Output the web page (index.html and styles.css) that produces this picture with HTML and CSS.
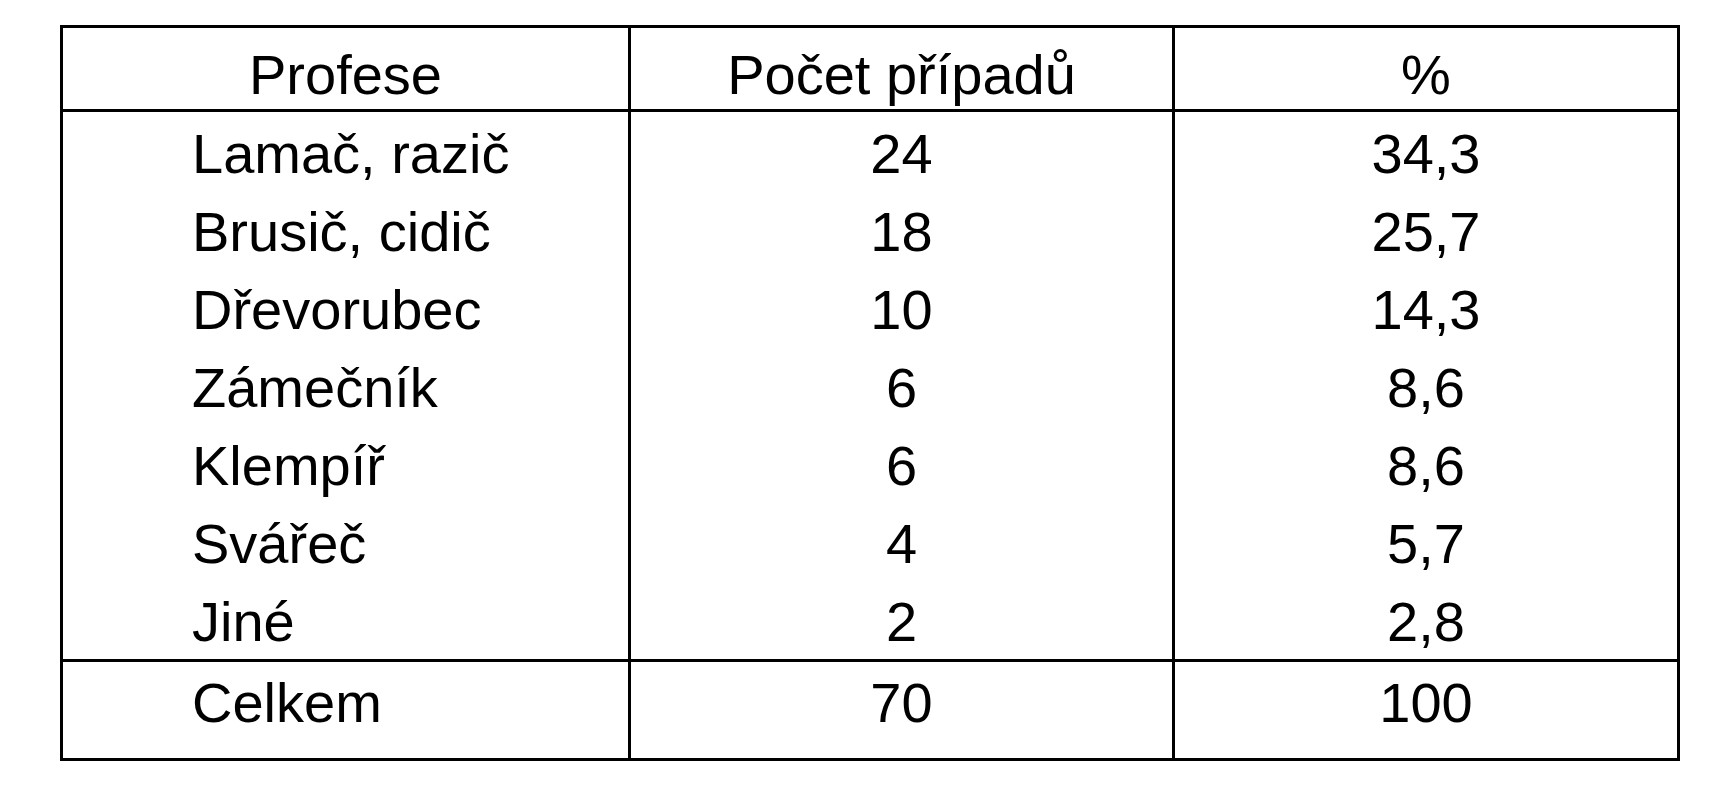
FILE: index.html
```html
<!DOCTYPE html>
<html lang="cs">
<head>
<meta charset="utf-8">
<title>Profese</title>
<link rel="stylesheet" href="styles.css">
</head>
<body>
<main class="page">
  <table class="stats">
    <thead>
      <tr class="head-row">
        <th class="c1">Profese</th>
        <th class="c2">Počet případů</th>
        <th class="c3">%</th>
      </tr>
    </thead>
    <tbody>
      <tr class="row r1"><td class="c1 name">Lamač, razič</td><td class="c2">24</td><td class="c3">34,3</td></tr>
      <tr class="row"><td class="c1 name">Brusič, cidič</td><td class="c2">18</td><td class="c3">25,7</td></tr>
      <tr class="row"><td class="c1 name">Dřevorubec</td><td class="c2">10</td><td class="c3">14,3</td></tr>
      <tr class="row"><td class="c1 name">Zámečník</td><td class="c2">6</td><td class="c3">8,6</td></tr>
      <tr class="row"><td class="c1 name">Klempíř</td><td class="c2">6</td><td class="c3">8,6</td></tr>
      <tr class="row"><td class="c1 name">Svářeč</td><td class="c2">4</td><td class="c3">5,7</td></tr>
      <tr class="row last"><td class="c1 name">Jiné</td><td class="c2">2</td><td class="c3">2,8</td></tr>
    </tbody>
    <tfoot>
      <tr class="total-row"><td class="c1 name">Celkem</td><td class="c2">70</td><td class="c3">100</td></tr>
    </tfoot>
  </table>
</main>
</body>
</html>
```
FILE: styles.css
```css
html, body {
  margin: 0;
  padding: 0;
  background: #ffffff;
}

.page {
  padding: 25px 0 0 60px;
}

.stats {
  border-collapse: separate;
  border-spacing: 0;
  border: 3px solid #000;
  table-layout: fixed;
  width: 1620px;
  font-family: "Liberation Sans", Arial, sans-serif;
  font-size: 56px;
  line-height: 64px;
  color: #000;
}

.stats th,
.stats td {
  padding: 0;
  vertical-align: top;
  font-weight: normal;
  text-align: center;
  box-sizing: border-box;
}

.c1 {
  width: 568px;
  border-right: 3px solid #000;
}

.c2 {
  width: 544px;
  border-right: 3px solid #000;
}

.c3 {
  width: 502px;
}

.stats .name {
  text-align: left;
  padding-left: 129px;
}

.head-row th {
  height: 84px;
  padding-top: 15px;
  border-bottom: 3px solid #000;
}

.row td {
  height: 78px;
  padding-top: 10px;
}

.row.r1 td {
  padding-top: 10px;
}

.row.last td {
  height: 82px;
  border-bottom: 3px solid #000;
}

.total-row td {
  height: 96px;
  padding-top: 9px;
}
```
